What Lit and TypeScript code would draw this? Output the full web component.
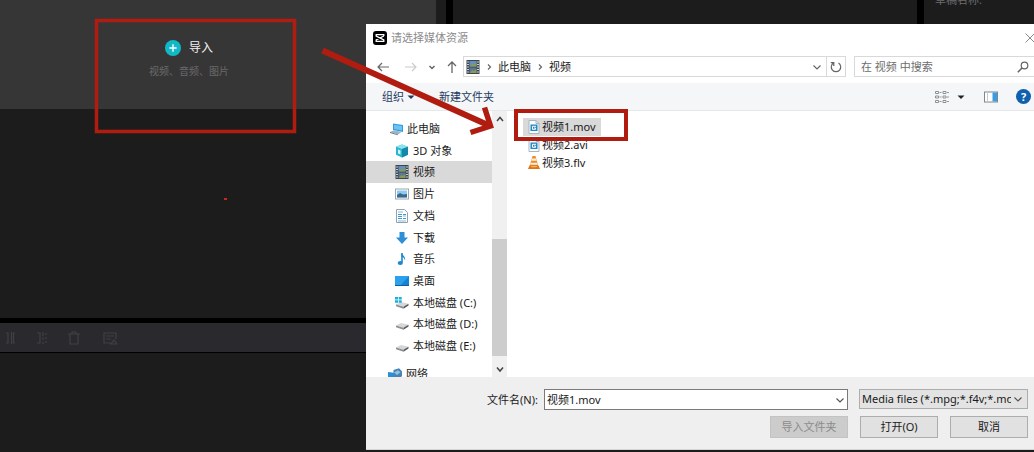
import { LitElement, html, css, svg, nothing } from "lit";
import { customElement, property, state } from "lit/decorators.js";
import { classMap } from "lit/directives/class-map.js";

const videoIcon = svg`
  <rect x="0.5" y="0" width="13" height="14" fill="#3c4650"/>
  <path d="M1 2h2M1 4.500h2M1 7h2M1 9.500h2M1 12h2M11 2h2M11 4.500h2M11 7h2M11 9.500h2M11 12h2" stroke="#c9ced2" stroke-width="1.200"/>
  <rect x="3.500" y="1" width="7" height="5.500" fill="#5f8fc4"/>
  <rect x="3.500" y="7.500" width="7" height="5.500" fill="#58789a"/>
  <path d="M3.500 6.500l3-3 1.500 1 2.500-2v4zM3.500 13l3-3 1.500 1 2.500-2v4z" fill="#8a9a52"/>`;

const driveShape = svg`
  <path d="M1 8.500L6 6l7.500 1.800-5 3z" fill="#d4d6d8"/>
  <path d="M1 8.500l7.500 2.300v2L1 10.300z" fill="#8d9093"/>
  <path d="M8.500 10.800l5-3v1.800l-5 3.200z" fill="#55585b"/>`;

const clipIcon = svg`
  <path d="M2 .5h7l3 3v10H2z" fill="#fafcfd" stroke="#a9b4bd"/>
  <path d="M9 .5v3h3" fill="none" stroke="#a9b4bd"/>
  <rect x="3.500" y="4.500" width="7" height="6.500" fill="#2389c6"/>
  <path d="M9 6.300H5.500v3h3V8H7" fill="none" stroke="#fff"/>`;

const icons: Record<string, unknown> = {
  pc: svg`
    <path d="M3 1.500l10 1.500v7L3 8z" fill="#2f9be0"/>
    <path d="M4 2.800l8 1.200v4.600L4 7z" fill="#6cc4f5"/>
    <path d="M0 10l4-1.800L11.500 10 8 12.500z" fill="#9fb3c2"/>
    <path d="M0 10l8 2.500v.8L0 11z" fill="#5d7486"/>`,
  cube: svg`
    <path d="M7 .5l6 2.300v8L7 13.500 1 10.800v-8z" fill="#27b5cf"/>
    <path d="M7 .5l6 2.300L7 5 1 2.800z" fill="#8be3ee"/>
    <path d="M7 5l6-2.200v8L7 13.500z" fill="#1488a8"/>
    <path d="M3 5.500l2.500 1v4L3 9.500z" fill="#d5f4f8"/>`,
  video: videoIcon,
  picture: svg`
    <rect x="0.500" y="2" width="13" height="10" fill="#fff" stroke="#9aa8b2"/>
    <rect x="2" y="3.500" width="10" height="7" fill="#8ecbf0"/>
    <path d="M2 8l3-2 3 1.500 4-.5v3.500H2z" fill="#37698e"/>`,
  doc: svg`
    <path d="M1.500.5h8l3 3v10h-11z" fill="#fff" stroke="#8fa3b1"/>
    <path d="M3 3h5M8 7h3M3 12h8" stroke="#8fb6cf"/>
    <path d="M3 5.500h4M3 7.500h4M3 9.500h4M8 5.500h3M8 9.500h3" stroke="#3c9bd4" stroke-width="1.200"/>`,
  download: svg`<path d="M4.500 1h5v5.500H13L7 13 1 6.500h3.500z" fill="#2d8fd6"/>`,
  music: svg`
    <path d="M7 1v9.500" stroke="#1a87d0" stroke-width="1.600"/>
    <ellipse cx="5.300" cy="11" rx="2.600" ry="2" fill="#1a87d0"/>
    <path d="M6.500.5c.5 3 4.500 3.500 3.500 8-.5-2.500-2-3.500-3.500-4z" fill="#1a87d0"/>`,
  desktop: svg`
    <rect x="0" y="2" width="14" height="10" fill="#1583d3"/>
    <path d="M0 2h14L5 12H0z" fill="#2ba0ec"/>
    <path d="M0 11.500h14" stroke="#0f5f9c"/>`,
  system: svg`${driveShape}
    <path d="M0 1h3v2.500H0zM3.700 1h3v2.500h-3zM0 4.200h3v2.500H0zM3.700 4.200h3v2.500h-3z" fill="#18b0dc"/>`,
  drive: driveShape,
  network: svg`
    <path d="M0 5l6 .8v6L0 11z" fill="#2b8fd6"/>
    <path d="M5.500 3L11 1.200l3 3v5L9 12.500l-3.500-1z" fill="#4a82b4"/>
    <path d="M6 5.500l4-2.300 2.500 2L9 8z" fill="#8ec3e8"/>
    <path d="M1 12l6 1 3-1.500" fill="none" stroke="#53748c"/>`,
  clip: clipIcon,
  cone: svg`
    <path d="M5.500 0h3l2.800 10H2.700z" fill="#f08a1c"/>
    <path d="M4.900 2.500h4.200l.6 2.300H4.300zM3.700 6.700h6.600l.5 2H3.200z" fill="#f7efe6"/>
    <path d="M2.500 9.500h9L13 13H1z" fill="#dd7416"/>
    <path d="M3.500 10h7l-1 1.200h-5z" fill="#f9b15c"/>`,
  app: svg`
    <rect width="14" height="14" rx="3" fill="#000"/>
    <path d="M10.800 5V3.700H3.200V5l7.600 4v1.300H3.200V9l7.600-4" fill="none" stroke="#fff" stroke-width="1.300"/>`,
  back: svg`<path d="M13 7H2M6 3L2 7l4 4" fill="none" stroke="currentColor" stroke-width="1.200"/>`,
  forward: svg`<path d="M1 7h11M8 3l4 4-4 4" fill="none" stroke="currentColor" stroke-width="1.200"/>`,
  up: svg`<path d="M7 13V2M3 6l4-4 4 4" fill="none" stroke="currentColor" stroke-width="1.300"/>`,
  chevron: svg`<path d="M3.500 5.500L7 9l3.500-3.500" fill="none" stroke="currentColor" stroke-width="1.200"/>`,
  smallChevron: svg`<path d="M4.500 6L7 8.500 9.500 6" fill="none" stroke="currentColor" stroke-width="1.500"/>`,
  crumb: svg`<path d="M6 4.500L8.500 7 6 9.500" fill="none" stroke="currentColor" stroke-width="1.200"/>`,
  scrollUp: svg`<path d="M4 9l3-3.500L10 9" fill="none" stroke="currentColor" stroke-width="1.500"/>`,
  scrollDown: svg`<path d="M4 5.500L7 9l3-3.500" fill="none" stroke="currentColor" stroke-width="1.500"/>`,
  refresh: svg`<path d="M9.500 3A4.700 4.700 0 1 1 4.500 3M4.800 6V2.700H1.800" fill="none" stroke="currentColor" stroke-width="1.200"/>`,
  search: svg`<circle cx="8.500" cy="5.500" r="3.300" fill="none" stroke="currentColor" stroke-width="1.200"/><path d="M6 8l-4.200 4.200" stroke="currentColor" stroke-width="1.600"/>`,
  close: svg`<path d="M2.500 2.500l9 9M11.500 2.500l-9 9" stroke="currentColor"/>`,
  caret: svg`<path d="M3.500 5.500h7L7 9z" fill="currentColor"/>`,
  view: svg`
    <path d="M.5 1.500h3v2h-3zM.5 6h3v2h-3zM.5 10.500h3v2h-3zM8 1.500h3v2H8zM8 6h3v2H8zM8 10.500h3v2H8z" fill="#fff" stroke="#8b9095"/>
    <path d="M4.500 2.500h2M4.500 7h2M4.500 11.500h2M12 2.500h2M12 7h2M12 11.500h2" stroke="#9a9a9a"/>`,
  pane: svg`
    <rect x="0.500" y="2" width="13" height="10" fill="#fff" stroke="#7d8890"/>
    <rect x="8.500" y="2.500" width="4.500" height="9" fill="#3d9be0"/>
    <path d="M3.500 2v10" stroke="#c3cbd0"/>`,
  plus: svg`
    <circle cx="7" cy="7" r="7" fill="#11b9c6"/>
    <path d="M7 3.800v6.400M3.800 7h6.400" stroke="#fff" stroke-width="1.200"/>`,
  splitLeft: svg`<path d="M3 2h2v10H3M8.500 1v12M12 2h-1.500v10H12" fill="none" stroke="currentColor" stroke-width="1.200"/>`,
  splitRight: svg`<path d="M2 2h3v10H2M8 1v4M8 6v3M8 11v2M11 2v2M11 6v2M11 10v2" fill="none" stroke="currentColor" stroke-width="1.200"/>`,
  trash: svg`<path d="M1 3h12M5 3V1h4v2M3 3v10h8V3" fill="none" stroke="currentColor" stroke-width="1.200"/>`,
  caption: svg`<path d="M8 12H1V2h12v6M3 5h8M3 8h5M8 13l3-4 3 4z" fill="none" stroke="currentColor" stroke-width="1.200"/>`,
};

@customElement("ui-icon")
class UiIcon extends LitElement {
  static styles = css`
    :host { display: inline-flex; flex: none; width: 14px; height: 14px; }
    .glyph { display: block; width: 100%; height: 100%; }
  `;
  @property() name = "";
  render() {
    return html`<svg class="glyph" viewBox="0 0 14 14" aria-hidden="true">${icons[this.name] ?? nothing}</svg>`;
  }
}

const places = [
  { icon: "cube", label: "3D 对象" },
  { icon: "video", label: "视频" },
  { icon: "picture", label: "图片" },
  { icon: "doc", label: "文档" },
  { icon: "download", label: "下载" },
  { icon: "music", label: "音乐" },
  { icon: "desktop", label: "桌面" },
  { icon: "system", label: "本地磁盘 (C:)" },
  { icon: "drive", label: "本地磁盘 (D:)" },
  { icon: "drive", label: "本地磁盘 (E:)" },
];

const files = [
  { icon: "clip", name: "视频1.mov" },
  { icon: "clip", name: "视频2.avi" },
  { icon: "cone", name: "视频3.flv" },
];

@customElement("file-dialog")
class FileDialog extends LitElement {
  static styles = css`
    :host {
      display: flex;
      flex-direction: column;
      background: #fff;
      color: #1a1a1a;
      overflow: hidden;
    }
    * { box-sizing: border-box; }
    button, input, select {
      font: inherit;
      color: inherit;
      margin: 0;
      padding: 0;
      border: 0;
      background: none;
      border-radius: 0;
      min-width: 0;
    }
    button { display: inline-flex; align-items: center; white-space: nowrap; }
    .title {
      display: flex;
      align-items: center;
      gap: 4px;
      height: 27px;
      padding-left: 7px;
      color: #8b8b8b;
    }
    .title-text { flex: 1; font-size: 11px; font-weight: 400; margin: 0; }
    .close { margin-right: -3px; color: #8a8a8a; }
    .nav {
      display: flex;
      align-items: center;
      height: 21px;
      margin: 5px 0 6px;
      color: #666;
    }
    .arrows { display: flex; align-items: center; gap: 6px; width: 97px; padding-left: 10px; }
    .forward { color: #ccc; margin: 0 1px 0 8px; }
    .address {
      flex: 1;
      display: flex;
      align-items: center;
      align-self: stretch;
      border: 1px solid #d9d9d9;
      padding-left: 2px;
      gap: 2px;
    }
    .crumb { color: #1a1a1a; }
    .fill { flex: 1; }
    .refresh { align-self: stretch; width: 19px; justify-content: center; border-left: 1px solid #d9d9d9; }
    .search {
      display: flex;
      align-items: center;
      align-self: stretch;
      width: 180px;
      margin-left: 8px;
      padding: 0 4px 0 6px;
      border: 1px solid #d9d9d9;
      border-right: 0;
    }
    .search-input { flex: 1; outline: none; }
    .search-input::placeholder { color: #6d6d6d; opacity: 1; }
    .tools {
      display: flex;
      align-items: center;
      height: 28px;
      padding: 0 3px 0 16px;
      background: #f4f6f8;
      border-bottom: 1px solid #e4e8eb;
      color: #1e3a5f;
    }
    .new-folder { margin-left: 21px; }
    .view-caret { margin: 0 16px 0 5px; color: #222; }
    .help {
      width: 15px;
      height: 15px;
      margin-left: 18px;
      justify-content: center;
      border-radius: 50%;
      background: #0f61ae;
      color: #fff;
      font-weight: 700;
    }
    .body { flex: 1; min-height: 0; display: flex; }
    .tree {
      width: 126px;
      display: flex;
      flex-direction: column;
      padding-top: 7px;
      overflow: hidden;
    }
    .places {
      flex: 1;
      min-height: 0;
      display: flex;
      flex-direction: column;
      margin: 0;
      padding: 0;
      list-style: none;
    }
    .place { flex: 1; min-height: 0; display: flex; }
    .place-button { flex: 1; gap: 4px; padding-left: 29px; }
    .place-button.root { gap: 3px; padding-left: 24px; }
    .place-button.current { background: #d9d9d9; }
    .network { flex: none; height: 14px; margin-top: 6px; overflow: hidden; display: flex; align-items: flex-start; }
    .network-button { height: 22px; gap: 4px; padding-left: 22px; }
    .scrollbar {
      width: 15px;
      display: flex;
      flex-direction: column;
      background: #f0f0f0;
      color: #444;
    }
    .scroll-button { height: 16px; justify-content: center; }
    .track { flex: 1; display: flex; flex-direction: column; justify-content: flex-end; padding-bottom: 5px; }
    .thumb { height: 51%; background: #cdcdcd; }
    .files { flex: 1; margin: 0; padding: 7px 0 0 16px; list-style: none; }
    .file { display: flex; height: 18px; }
    .file-button { gap: 1px; padding: 0 5px 0 4px; }
    .file-button.selected { background: #d9d9d9; }
    .footer {
      display: grid;
      grid-template-columns: 1fr 78px 78px 78px;
      column-gap: 12px;
      row-gap: 6px;
      padding: 12px 6px 11px 121px;
      background: #efefef;
      border-bottom: 1px solid #d6d6d6;
    }
    .name-row { grid-column: 1 / 3; display: flex; align-items: center; gap: 6px; }
    .combo {
      flex: 1;
      display: flex;
      align-items: center;
      height: 21px;
      padding: 0 0 0 2px;
      background: #fff;
      border: 1px solid #7a7a7a;
      color: #555;
    }
    .name-input { flex: 1; color: #1a1a1a; outline: none; }
    .filter {
      grid-column: 3 / 5;
      display: grid;
      grid-template-columns: minmax(0, 1fr) 16px;
      align-items: center;
      height: 20px;
      margin-left: -1px;
      background: #e3e3e3;
      border: 1px solid #adadad;
      color: #555;
    }
    .filter-select {
      grid-area: 1 / 1;
      width: 100%;
      height: 18px;
      padding-left: 2px;
      appearance: none;
      color: #1a1a1a;
      outline: none;
      overflow: hidden;
      text-overflow: clip;
    }
    .action {
      height: 22px;
      justify-content: center;
      background: #e1e1e1;
      border: 1px solid #adadad;
    }
    .action.import { grid-column: 2; background: #cccccc; border-color: #c3c3c3; color: #8b8b8b; }
  `;

  @state() private place = "视频";
  @state() private file = "视频1.mov";

  render() {
    return html`
      <header class="title">
        <ui-icon name="app"></ui-icon>
        <h1 class="title-text">请选择媒体资源</h1>
        <button class="close" aria-label="关闭"><ui-icon name="close"></ui-icon></button>
      </header>
      <nav class="nav">
        <div class="arrows">
          <button aria-label="后退"><ui-icon name="back"></ui-icon></button>
          <button class="forward" aria-label="前进"><ui-icon name="forward"></ui-icon></button>
          <button aria-label="最近位置"><ui-icon name="smallChevron"></ui-icon></button>
          <button aria-label="上移"><ui-icon name="up"></ui-icon></button>
        </div>
        <div class="address">
          <ui-icon name="video"></ui-icon>
          <ui-icon name="crumb"></ui-icon>
          <button class="crumb">此电脑</button>
          <ui-icon name="crumb"></ui-icon>
          <button class="crumb">视频</button>
          <span class="fill"></span>
          <button aria-label="展开"><ui-icon name="chevron"></ui-icon></button>
          <button class="refresh" aria-label="刷新"><ui-icon name="refresh"></ui-icon></button>
        </div>
        <div class="search">
          <input class="search-input" type="text" aria-label="搜索" placeholder="在 视频 中搜索">
          <ui-icon name="search"></ui-icon>
        </div>
      </nav>
      <div class="tools">
        <button>组织<ui-icon name="caret"></ui-icon></button>
        <button class="new-folder">新建文件夹</button>
        <span class="fill"></span>
        <button aria-label="视图"><ui-icon name="view"></ui-icon></button>
        <button class="view-caret" aria-label="更多选项"><ui-icon name="caret"></ui-icon></button>
        <button aria-label="预览窗格"><ui-icon name="pane"></ui-icon></button>
        <button class="help" aria-label="帮助">?</button>
      </div>
      <div class="body">
        <div class="tree">
          <ul class="places">
            <li class="place">
              <button class="place-button root"><ui-icon name="pc"></ui-icon>此电脑</button>
            </li>
            ${places.map((p) => html`
              <li class="place">
                <button
                  class=${classMap({ "place-button": true, current: p.label === this.place })}
                  @click=${() => (this.place = p.label)}
                ><ui-icon name=${p.icon}></ui-icon>${p.label}</button>
              </li>`)}
          </ul>
          <div class="network">
            <button class="network-button"><ui-icon name="network"></ui-icon>网络</button>
          </div>
        </div>
        <div class="scrollbar">
          <button class="scroll-button" aria-label="向上滚动"><ui-icon name="scrollUp"></ui-icon></button>
          <div class="track"><div class="thumb"></div></div>
          <button class="scroll-button" aria-label="向下滚动"><ui-icon name="scrollDown"></ui-icon></button>
        </div>
        <ul class="files">
          ${files.map((f) => html`
            <li class="file">
              <button
                class=${classMap({ "file-button": true, selected: f.name === this.file })}
                @click=${() => (this.file = f.name)}
              ><ui-icon name=${f.icon}></ui-icon>${f.name}</button>
            </li>`)}
        </ul>
      </div>
      <footer class="footer">
        <div class="name-row">
          <label for="name">文件名(N):</label>
          <div class="combo">
            <input class="name-input" id="name" type="text" .value=${this.file}>
            <ui-icon name="chevron"></ui-icon>
          </div>
        </div>
        <div class="filter">
          <select class="filter-select" aria-label="文件类型">
            <option>Media files (*.mpg;*.f4v;*.mov)</option>
          </select>
          <ui-icon name="chevron"></ui-icon>
        </div>
        <button class="action import" disabled>导入文件夹</button>
        <button class="action">打开(O)</button>
        <button class="action">取消</button>
      </footer>
    `;
  }
}

@customElement("app-root")
class AppRoot extends LitElement {
  static styles = css`
    :host {
      display: grid;
      grid-template-rows: 318px 28px 1fr;
      position: relative;
      min-height: 100vh;
      overflow: hidden;
      background: #000;
      font-family: "Noto Sans", "Noto Sans CJK SC", sans-serif;
      font-size: 11px;
      line-height: 16px;
    }
    * { box-sizing: border-box; }
    button { font: inherit; color: inherit; border: 0; padding: 0; background: none; }
    .panels {
      display: grid;
      grid-template-columns: 446px 1fr 110px;
      column-gap: 7px;
    }
    .panel { background: #1c1c1c; min-width: 0; overflow: hidden; }
    .import {
      display: flex;
      flex-direction: column;
      align-items: center;
      gap: 7px;
      height: 109px;
      margin-right: 10px;
      padding: 40px 58px 0 0;
      background: #363636;
      color: #6a6a6a;
      font-size: 10px;
    }
    .import-button {
      display: flex;
      align-items: center;
      gap: 8px;
      color: #f2f2f2;
      font-size: 12px;
      line-height: 16px;
    }
    .plus { width: 16px; height: 16px; }
    .import-hint { margin: 0; }
    .draft { margin: -8px 0 0 11px; color: #6d6d6d; }
    .toolbar {
      display: flex;
      align-items: center;
      gap: 18px;
      margin-top: 5px;
      height: 29px;
      padding-left: 3px;
      background: #2a292e;
      color: #414045;
    }
    .tool { display: flex; }
    .tool.last { margin-left: 4px; }
    .timeline { margin-top: 7px; background: #1c1c1c; }
    .dialog {
      position: absolute;
      left: 366px;
      right: 0;
      top: 24px;
      bottom: 2px;
    }
    .marks {
      position: absolute;
      left: 0;
      top: 0;
      width: 100%;
      height: 100%;
      pointer-events: none;
    }
  `;

  render() {
    return html`
      <div class="panels">
        <section class="panel">
          <div class="import">
            <button class="import-button"><ui-icon class="plus" name="plus"></ui-icon>导入</button>
            <p class="import-hint">视频、音频、图片</p>
          </div>
        </section>
        <section class="panel"></section>
        <section class="panel"><p class="draft">草稿名称:</p></section>
      </div>
      <div class="toolbar">
        <button class="tool" aria-label="向左分割"><ui-icon name="splitLeft"></ui-icon></button>
        <button class="tool" aria-label="向右分割"><ui-icon name="splitRight"></ui-icon></button>
        <button class="tool" aria-label="删除"><ui-icon name="trash"></ui-icon></button>
        <button class="tool last" aria-label="字幕"><ui-icon name="caption"></ui-icon></button>
      </div>
      <div class="timeline"></div>
      <file-dialog class="dialog" role="dialog" aria-label="请选择媒体资源"></file-dialog>
      <svg class="marks" aria-hidden="true">
        <g fill="none" stroke="#b01c10">
          <rect x="96.500" y="20.500" width="198" height="111" stroke-width="3.500"/>
          <rect x="516" y="111" width="110" height="28" stroke-width="4"/>
          <path d="M322.500 50.500L489 125.500" stroke-width="6"/>
          <path d="M484.500 107.500L490.500 126L470.500 132.500" stroke-width="5.500"/>
        </g>
        <rect x="224" y="198" width="3" height="2" fill="#c22a1a"/>
      </svg>
    `;
  }
}
